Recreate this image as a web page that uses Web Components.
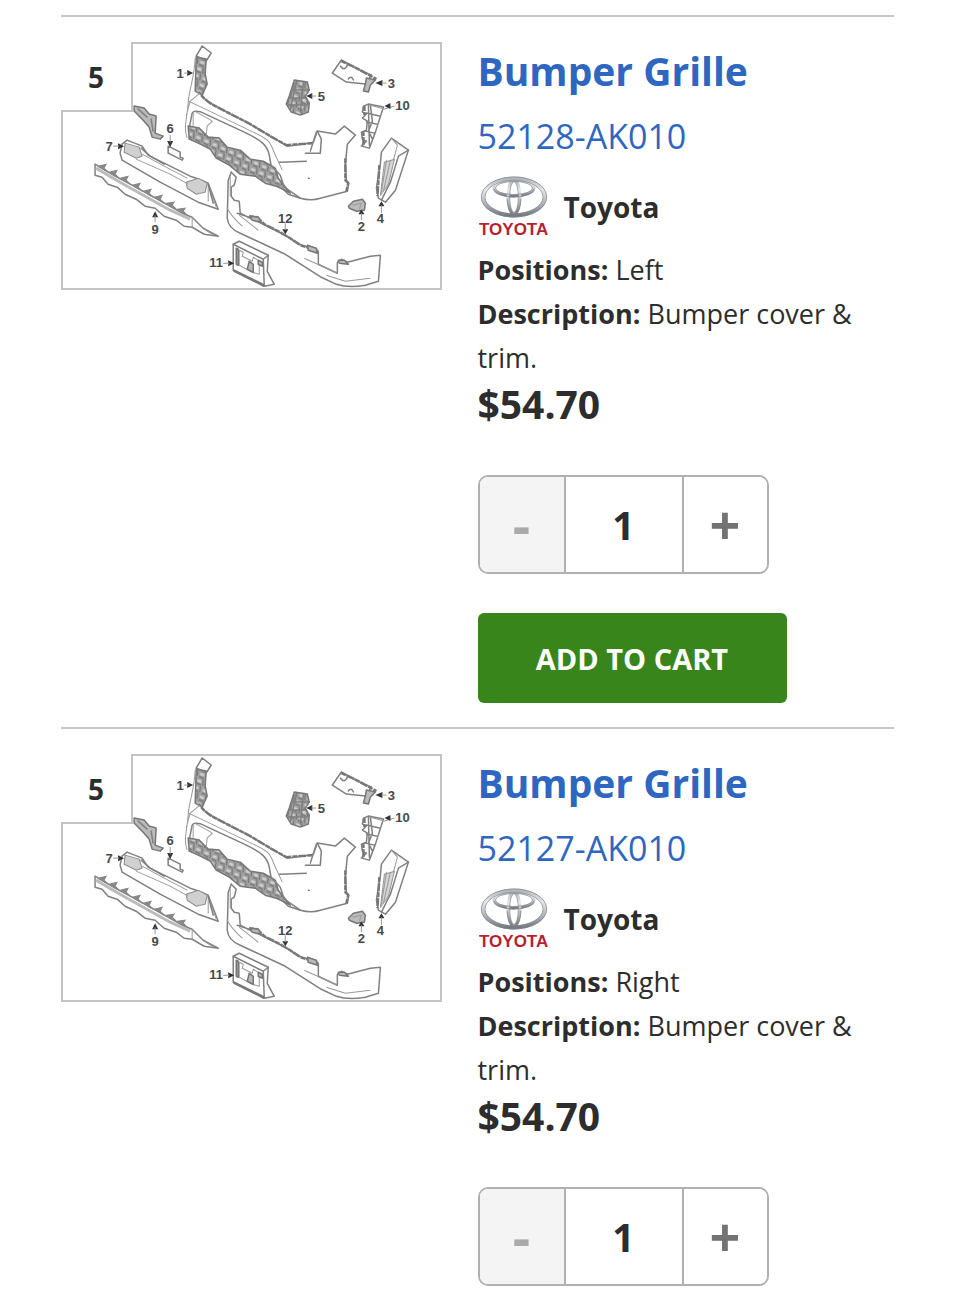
<!DOCTYPE html>
<html lang="en">
<head>
<meta charset="utf-8">
<meta name="viewport" content="width=device-width, initial-scale=1">
<title>Bumper Grille parts</title>
<style>
    body {
        margin: 0;
        padding: 15px 61px 0;
        background: #fff;
        color: #2d2d2d;
        font-family: "Open Sans", "Noto Sans", sans-serif;
    }
    main {
        display: grid;
        gap: 24px;
    }
</style>
</head>
<body>
<main>
    <part-card name="Bumper Grille" number="52128-AK010" brand="Toyota" callout="5" price="$54.70">
        <part-spec label="Positions:">Left</part-spec>
        <part-spec label="Description:">Bumper cover &amp; trim.</part-spec>
        <cart-button slot="action">ADD TO CART</cart-button>
    </part-card>
    <part-card name="Bumper Grille" number="52127-AK010" brand="Toyota" callout="5" price="$54.70">
        <part-spec label="Positions:">Right</part-spec>
        <part-spec label="Description:">Bumper cover &amp; trim.</part-spec>
    </part-card>
</main>

<script>
class PartDiagram extends HTMLElement {
    constructor() {
        super();
        this.attachShadow({mode: "open"});
    }

    connectedCallback() {
        this.shadowRoot.innerHTML = /*html*/`
            <style>
                :host {
                    display: block;
                    position: relative;
                    border: 2px solid #c4c4c4;
                }
                svg {
                    display: block;
                    width: 100%;
                    height: auto;
                }
                .callout {
                    position: absolute;
                    top: -2px;
                    left: -2px;
                    width: 70px;
                    height: 68px;
                    background: #fff;
                    border: solid #c4c4c4;
                    border-width: 0 2px 2px 0;
                    font-size: 28px;
                    font-weight: 700;
                    line-height: 70px;
                    text-align: center;
                }
                .line { fill: none; stroke: #808080; stroke-width: 1.5; stroke-linejoin: round; stroke-linecap: round; }
                .thin { fill: none; stroke: #999; stroke-width: 1; stroke-linejoin: round; }
                .edge { fill: none; stroke: #777; stroke-width: 2.5; stroke-dasharray: 5 1 8 1; }
                .fill { fill: #bbb; stroke: #777; stroke-width: 1.5; stroke-linejoin: round; }
                .mesh { fill: url(#mesh); stroke: #777; stroke-width: 1.5; stroke-linejoin: round; }
                .arrow { fill: #333; }
                text { font: bold 13px "Liberation Sans", sans-serif; fill: #484848; text-anchor: middle; }
            </style>
            <svg viewBox="63 44 376 244" role="img" aria-label="Front bumper exploded view">
                <defs>
                    <pattern id="mesh" width="9" height="7" patternUnits="userSpaceOnUse" patternTransform="rotate(24)">
                        <rect width="9" height="7" fill="#a2a2a2"/>
                        <ellipse cx="3" cy="3" rx="2.5" ry="1.3" fill="#d0d0d0"/>
                        <path d="M6 0 8 6M1 6h5" stroke="#6c6c6c" fill="none"/>
                    </pattern>
                </defs>

                <!-- 1: bumper cover -->
                <path class="mesh" d="M196 57 206 59 205 74 207 84 202 95 195 91Z"/>
                <path class="line" d="M202 46 211 53 206 61 196 56ZM200 58 196 56"/>
                <path class="thin" d="M195 58C194 80 189 88 188 103S183 128 187 138M201 92 190 101 186 116"/>
                <path class="line" d="M199 92C204 100 211 104 221 109L250 124 270 136 287 146 303 144 313 142 317 131 335 134 344 126 355 135 347 144 345 164 346 180 348 184 347 191 320 198Q311 201 300 198L288 194 277 183"/>
                <path class="edge" d="M201 95C207 102 211 104 221 109L250 124 270 136 286 145 313 143"/>
                <path class="edge" d="M345 158 345 180 348 183 346 191"/>
                <path class="line" d="M316 132 310 151M317 131 321 139 320 153H305M279 162 306 161M308 178h1"/>
                <path class="thin" d="M188 101 201 107 253 132C271 140 270 143 275 155L282 170"/>
                <path class="line" d="M189 128 192 113Q194 110 201 112L244 132C261 140 267 145 269 155L271 167"/>
                <path class="thin" d="M193 113V126M196 112 209 119 212 121 207 126 206 134"/>
                <path class="mesh" d="M188 126 199 128 208 137 219 138 227 147 240 150 250 159 263 161 275 168 278 178 290 193 276 186 265 183 255 176 240 174 229 165 216 158 210 149 198 143 189 139Z"/>
                <path class="line" d="M270 164 280 175 284 187 300 198"/>
                <path class="arrow" d="M193 73 187 70v6Z"/>
                <path class="thin" d="M184 73h4"/>
                <text x="180" y="78">1</text>

                <!-- 5: fog lamp bezel -->
                <path class="mesh" d="M294 80 307 82 309 90 305 96 309 103 308 112 300 115 291 112 286 104 289 96Z"/>
                <path class="line" d="M292 90h15M289 98h16M288 105h19M296 82 290 110M303 83 300 112"/>
                <path class="arrow" d="M306 96 312 93v6Z"/>
                <path class="thin" d="M311 96h5"/>
                <text x="321" y="101">5</text>

                <!-- 3: upper bracket -->
                <path class="line" d="M341 60 332 73 346 82 365 84 371 75 363 72Z"/>
                <path class="edge" d="M341 61 356 68 376 79"/>
                <path class="line" d="M340 66q4 6 7-1M348 79q3-4 5 1"/>
                <path class="fill" d="M366 78 375 80 370 85 368 92 363 91 365 84Z"/>
                <path class="arrow" d="M375 83 382 80v6Z"/>
                <path class="thin" d="M381 83h5"/>
                <text x="391" y="88">3</text>

                <!-- 10: side retainer -->
                <path class="line" d="M368 104 363 106 362 112 366 114 362 118 367 121 366 130 361 132 362 139 366 141 361 146 369 148 375 132 383 107 368 104 369 145M366 113 379 116M366 122 376 124M365 131 374 133M370 105 372 121 368 131 372 139"/>
                <path class="edge" d="M364 106V115M363 131V146"/>
                <path class="thin" d="M369 105 384 109 394 106"/>
                <path class="arrow" d="M384 106 390 103v6Z"/>
                <text x="402" y="110">10</text>

                <!-- 4: side reflector trim -->
                <path class="line" d="M391 138 408 150 395 190 385 202 378 198 376 188 380 163 381 152Z"/>
                <path class="line" d="M408 150 398 156 390 182 381 200"/>
                <path d="M384 162 394 159 388 184 380 195Z" fill="#d5d5d5" stroke="#999"/>
                <path class="thin" d="M391 138 397 145 393 160M386 160 381 192M390 160 383 191"/>
                <path class="edge" d="M379 165 377 196"/>
                <path class="arrow" d="M381 201 378 206h6Z"/>
                <path class="thin" d="M381 205v8"/>
                <text x="380" y="223">4</text>

                <!-- 2: tow cap -->
                <path class="fill" d="M348 206 353 201 362 199 365 203 364 210 356 211 349 208Z"/>
                <path class="thin" d="M352 205 361 203 359 209"/>
                <path class="arrow" d="M361 209 358 214h6Z"/>
                <path class="thin" d="M361 213v7"/>
                <text x="361" y="231">2</text>

                <!-- mounting bracket beside the callout -->
                <path class="fill" d="M134 106 144 108 149 114 156 116 155 133 163 136 160 139 152 137 149 127 142 119 134 111Z"/>
                <path class="line" d="M138 109 147 117M151 119l2 12"/>

                <!-- 6: clip -->
                <path class="line" d="M168 146V153L182 160 183 158 180 157V152L168 146"/>
                <path class="arrow" d="M170 147 167 141h6Z"/>
                <path class="thin" d="M170 142v-7"/>
                <text x="170" y="133">6</text>

                <!-- 7: centre garnish -->
                <path class="line" d="M122 144 127 140 142 146 148 155 190 176 199 179 208 183 218 209 198 202 160 182 122 160 120 153Z"/>
                <path d="M125 143 139 147 142 156 136 158 124 152ZM186 182 198 178 207 183 205 192 196 194 187 188Z" fill="#d0d0d0" stroke="#888"/>
                <path class="thin" d="M142 154 164 166 187 178M136 159 170 174 188 184M208 184 208 201M208 184 216 207"/>
                <path class="line" d="M208 184 213 203M141 148 150 156 164 164"/>
                <path class="arrow" d="M124 146 118 143v6Z"/>
                <path class="thin" d="M113 146h6"/>
                <text x="109" y="151">7</text>

                <!-- 9: lower spoiler -->
                <path class="line" d="M95 164 95 175 102 177 108 184 117 187 125 194 136 199 145 206 155 208 164 216 176 220 184 226 192 227 204 234 218 236 203 228 192 217 182 213 166 204 150 195 132 185 115 176Z"/>
                <path d="M98 166 106 164 104 168 108 172ZM109 172 117 170 115 174 119 178ZM120 178 128 176 126 180 130 184ZM132 185 140 183 138 187 142 191ZM143 191 151 189 149 193 153 197ZM154 197 162 195 160 199 164 203ZM166 203 174 202 172 205 176 209ZM177 209 185 208 183 211 187 215Z" fill="#888" stroke="#888"/>
                <path d="M96 168 120 182 145 196 170 210 190 219" fill="none" stroke="#bbb" stroke-width="3"/>
                <path class="thin" d="M192 217V227M204 229 214 235"/>
                <path class="arrow" d="M155 211 152 217h6Z"/>
                <path class="thin" d="M155 215v7"/>
                <text x="155" y="234">9</text>

                <!-- 12: lower cover -->
                <path class="line" d="M231 172 228 180 227 218Q228 228 240 233L285 254 321 277 336 284Q348 288 365 285L378 281 380 255 370 256 347 262 341 259 337 262V273L318 264V251L308 250"/>
                <path class="line" d="M231 172 236 177 234 185 231 187V196L234 200 239 201 240 213 252 219M237 213 249 217 265 225 285 235 299 244 317 250"/>
                <path class="edge" d="M249 216 257 217 264 224 278 231 290 238 300 245 316 250"/>
                <path class="thin" d="M230 176V196M227 208Q231 216 242 226M239 215 258 230M304 258 337 273M326 275 345 281 370 278"/>
                <path class="fill" d="M250 216 258 217 261 222 252 220ZM307 245 316 248 317 253 308 250ZM338 260l6 0 4 4-9-1Z"/>
                <path class="arrow" d="M285 234 282 229h6Z"/>
                <path class="thin" d="M285 230v-7"/>
                <text x="285" y="223">12</text>

                <!-- 11: licence plate bracket -->
                <path class="line" d="M233 244 239 241 268 255 267 271 274 284 264 286 233 270Z"/>
                <path class="line" d="M233 244 263 259 264 286M263 259 268 255"/>
                <path class="thin" d="M239 250 243 252 242 256 252 261 253 257 259 261V274L252 272 239 265Z"/>
                <path class="fill" d="M249 261 253 264 253 272 247 269ZM236 248l2 1v16l-2-1ZM258 260l4 2v4l-4-2ZM234 270 263 284 264 286 234 271Z"/>
                <path class="arrow" d="M234 263 228 260v6Z"/>
                <path class="thin" d="M229 263h-6"/>
                <text x="216" y="267">11</text>
            </svg>
            <div class="callout"><slot></slot></div>
        `;
    }
}

class BrandLogo extends HTMLElement {
    constructor() {
        super();
        this.attachShadow({mode: "open"});
        this.shadowRoot.innerHTML = /*html*/`
            <style>
                :host { display: block; width: 73px; height: 61px; }
                svg { display: block; width: 100%; height: 100%; overflow: visible; }
                text { font: bold 17px "Liberation Sans", sans-serif; fill: #b81f30; }
            </style>
            <svg viewBox="0 0 73 61">
                <defs>
                    <linearGradient id="chrome" x1="0" y1="0" x2="0" y2="1">
                        <stop offset="0" stop-color="#b4b8bc"/>
                        <stop offset=".3" stop-color="#e6e8ea"/>
                        <stop offset=".65" stop-color="#b4b8bd"/>
                        <stop offset="1" stop-color="#747980"/>
                    </linearGradient>
                </defs>
                <g fill="none" stroke="url(#chrome)">
                    <ellipse cx="36" cy="21" rx="31" ry="18.5" stroke-width="4"/>
                    <ellipse cx="36" cy="12" rx="20" ry="8" stroke-width="3"/>
                    <ellipse cx="36" cy="21" rx="6" ry="17" stroke-width="3"/>
                </g>
                <g fill="none" stroke="#83888e" stroke-width=".7">
                    <ellipse cx="36" cy="21" rx="32.7" ry="20"/>
                    <ellipse cx="36" cy="21" rx="29" ry="16.8"/>
                    <path d="M16 13Q18 20 36 21 54 20 56 13"/>
                    <ellipse cx="36" cy="12" rx="18.5" ry="6.5"/>
                    <ellipse cx="36" cy="21" rx="4.3" ry="15.3"/>
                    <path d="M29 23Q30 37 36 38.500 42 37 43 23"/>
                </g>
                <text x="1" y="59">TOYOTA</text>
            </svg>
        `;
    }
}

class PartSpec extends HTMLElement {
    constructor() {
        super();
        this.attachShadow({mode: "open"});
    }

    connectedCallback() {
        this.shadowRoot.innerHTML = /*html*/`
            <style>
                :host { display: block; font-size: 27px; line-height: 44px; }
                b { font-weight: 700; }
            </style>
            <b>${this.getAttribute('label')}</b> <slot></slot>
        `;
    }
}

class QuantityStepper extends HTMLElement {
    constructor() {
        super();
        this.attachShadow({mode: "open"});
        this._value = 1;
        this.renderDom();
        this.addListener();
    }

    addListener() {
        const [minus, plus] = this.shadowRoot.querySelectorAll('button');
        minus.addEventListener('click', () => this.update(this._value - 1));
        plus.addEventListener('click', () => this.update(this._value + 1));
        this.shadowRoot.querySelector('input').addEventListener('change', (e) => {
            this.update(parseInt(e.target.value, 10) || 1);
        });
    }

    update(value) {
        this._value = Math.max(1, value);
        this.shadowRoot.querySelector('input').value = this._value;
        this.shadowRoot.querySelector('button').disabled = this._value === 1;
    }

    renderDom() {
        this.shadowRoot.innerHTML = /*html*/`
            <style>
                :host {
                    display: grid;
                    grid-template-columns: 84px 120px 83px;
                    width: max-content;
                    box-sizing: border-box;
                    height: 99px;
                    border: 2px solid #b0b0b0;
                    border-radius: 10px;
                    overflow: hidden;
                }
                button, input {
                    min-width: 0;
                    margin: 0;
                    padding: 0;
                    border: 0;
                    border-radius: 0;
                    background: #fff;
                    font-family: inherit;
                    font-weight: 700;
                    text-align: center;
                }
                button { color: #737373; font-size: 54px; line-height: 93px; cursor: pointer; }
                button:disabled { background: #f4f4f4; color: #aaa; cursor: default; }
                input {
                    color: #2d2d2d;
                    font-size: 39px;
                    border: solid #b0b0b0;
                    border-width: 0 2px;
                }
            </style>
            <button type="button" aria-label="Decrease quantity" disabled>-</button>
            <input type="text" inputmode="numeric" aria-label="Quantity" value="1">
            <button type="button" aria-label="Increase quantity">+</button>
        `;
    }
}

class CartButton extends HTMLElement {
    constructor() {
        super();
        this.attachShadow({mode: "open"});
        this.shadowRoot.innerHTML = /*html*/`
            <style>
                :host { display: block; margin-top: 39px; }
                button {
                    display: block;
                    width: 309px;
                    height: 90px;
                    padding: 0;
                    border: 0;
                    border-radius: 6px;
                    background: #38851b;
                    color: #fff;
                    font-family: inherit;
                    font-size: 29px;
                    font-weight: 700;
                    cursor: pointer;
                }
            </style>
            <button type="button"><slot></slot></button>
        `;
    }
}

class PartCard extends HTMLElement {
    constructor() {
        super();
        this.attachShadow({mode: "open"});
    }

    connectedCallback() {
        const {name, number, brand, callout, price} = this.readAttributes();
        this.shadowRoot.innerHTML = /*html*/`
            <style>
                :host {
                    display: grid;
                    grid-template-columns: 1fr 1fr;
                    align-items: start;
                    padding-top: 25px;
                    border-top: 2px solid #c8c8c8;
                }
                part-diagram { margin-right: 36px; }
                h2 { margin: 0; font-size: 39px; line-height: 58px; font-weight: 700; }
                a { color: #2f67c0; text-decoration: none; }
                .number { display: block; font-size: 34px; line-height: 72px; }
                .brand {
                    display: flex;
                    align-items: center;
                    gap: 13px;
                    padding: 4px 0 11px;
                    font-size: 28px;
                    line-height: 60px;
                    font-weight: 700;
                }
                .price { font-size: 39px; line-height: 48px; font-weight: 700; }
                quantity-stepper { margin-top: 47px; }
            </style>
            <part-diagram>${callout}</part-diagram>
            <div>
                <h2><a href="#${number}">${name}</a></h2>
                <a class="number" href="#${number}">${number}</a>
                <div class="brand"><brand-logo></brand-logo>${brand}</div>
                <slot></slot>
                <div class="price">${price}</div>
                <quantity-stepper></quantity-stepper>
                <slot name="action"></slot>
            </div>
        `;
    }

    readAttributes() {
        return ['name', 'number', 'brand', 'callout', 'price'].reduce((data, key) => {
            data[key] = this.getAttribute(key);
            return data;
        }, {});
    }
}

customElements.define('part-diagram', PartDiagram);
customElements.define('brand-logo', BrandLogo);
customElements.define('part-spec', PartSpec);
customElements.define('quantity-stepper', QuantityStepper);
customElements.define('cart-button', CartButton);
customElements.define('part-card', PartCard);
</script>
</body>
</html>
